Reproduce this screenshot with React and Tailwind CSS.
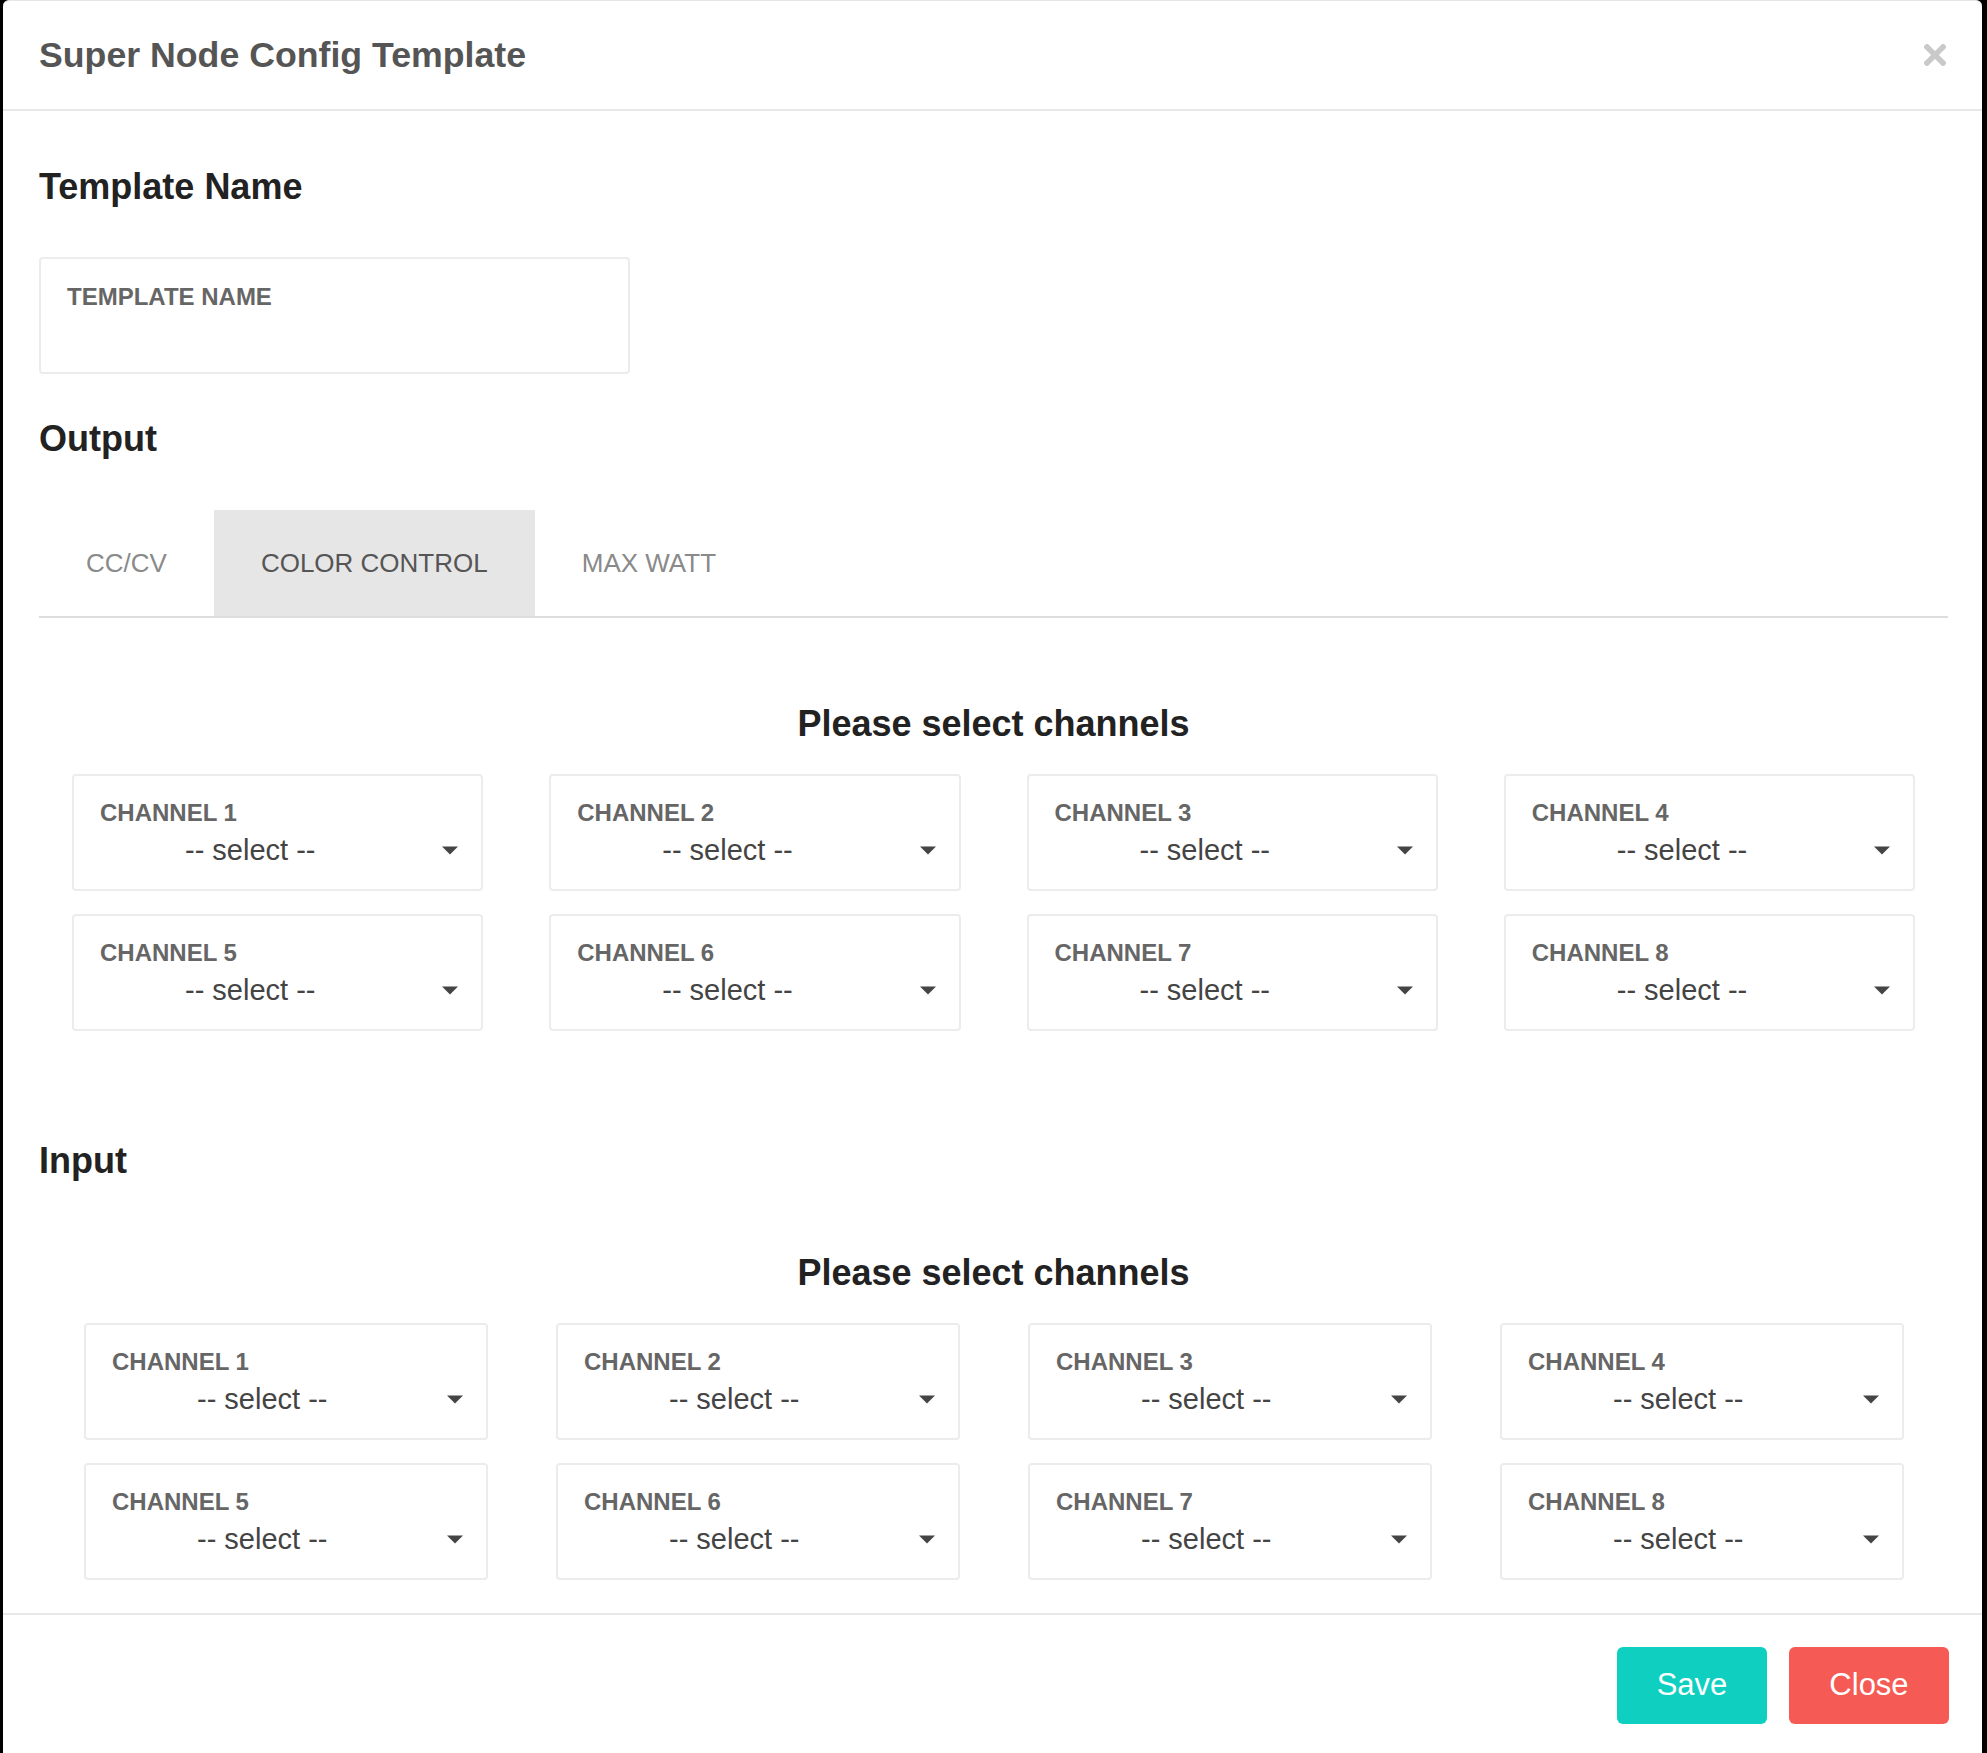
import React from "react";

const FONT = { fontFamily: '"Liberation Sans", Arial, Helvetica, sans-serif' };

function Arrow() {
  return (
    <svg className="ml-auto shrink-0" width="16" height="9" viewBox="0 0 16 9">
      <path d="M0 0.5 H16 L8 8.5 Z" fill="#444" />
    </svg>
  );
}

function ChannelBox({ label }) {
  return (
    <div className="h-[117px] rounded-[4px] border-2 border-[#ececec] bg-white pl-[26px] pr-[23px] pt-[23px]">
      <div className="text-[24px] leading-[28px] font-bold text-[#666]">{label}</div>
      <div className="mt-[6px] flex h-[34px] items-center">
        <span className="pl-[85px] text-[29px] leading-[34px] text-[#444]">-- select --</span>
        <Arrow />
      </div>
    </div>
  );
}

function ChannelGrid({ className }) {
  const labels = [1, 2, 3, 4, 5, 6, 7, 8].map((n) => `CHANNEL ${n}`);
  return (
    <div className={className}>
      {labels.map((l) => (
        <ChannelBox key={l} label={l} />
      ))}
    </div>
  );
}

export default function App() {
  return (
    <div className="h-[1753px] w-[1987px] overflow-hidden bg-black" style={FONT}>
      <div className="ml-[3px] mr-[5px] h-[1753px] overflow-hidden rounded-t-[6px] border-t border-[#e6e6e6] bg-white">
        {/* Header */}
        <div className="flex h-[110px] items-center justify-between border-b-2 border-[#e8e8e8] pl-[36px] pr-[36px]">
          <div className="text-[35.7px] font-bold leading-[44px] text-[#555]">Super Node Config Template</div>
          <svg width="22" height="22" viewBox="0 0 22 22">
            <path d="M3 3 L19 19 M19 3 L3 19" stroke="#c9c9c9" strokeWidth="5.5" strokeLinecap="square" />
          </svg>
        </div>

        {/* Body */}
        <div className="pl-[36px] pr-[34px] pt-[54px] pb-[33px]">
          <h2 className="text-[36px] font-bold leading-[44px] text-[#222]">Template Name</h2>
          <div className="mt-[48px] h-[117px] w-[591px] rounded-[4px] border-2 border-[#ececec] pl-[26px] pt-[24px]">
            <div className="text-[24px] font-bold leading-[28px] text-[#666]">TEMPLATE NAME</div>
          </div>

          <h2 className="mt-[43px] text-[36px] font-bold leading-[44px] text-[#222]">Output</h2>

          <div className="mt-[49px] flex border-b-2 border-[#dddddd]">
            <div className="flex h-[106px] items-center px-[47px] text-[26px] text-[#8a8a8a]">CC/CV</div>
            <div className="flex h-[106px] items-center bg-[#e6e6e6] px-[47px] text-[26px] text-[#555]">COLOR CONTROL</div>
            <div className="flex h-[106px] items-center px-[47px] text-[26px] text-[#8a8a8a]">MAX WATT</div>
          </div>

          <div className="mt-[84px] text-center text-[36px] font-bold leading-[44px] text-[#222]">Please select channels</div>
          <ChannelGrid className="mx-[33px] mt-[28px] grid grid-cols-4 gap-x-[66px] gap-y-[23px]" />

          <h2 className="mt-[108px] text-[36px] font-bold leading-[44px] text-[#222]">Input</h2>

          <div className="mt-[68px] text-center text-[36px] font-bold leading-[44px] text-[#222]">Please select channels</div>
          <ChannelGrid className="ml-[45px] mr-[44px] mt-[28px] grid grid-cols-4 gap-x-[68px] gap-y-[23px]" />
        </div>

        {/* Footer */}
        <div className="flex justify-end gap-[22px] border-t-2 border-[#e8e8e8] pt-[32px] pr-[33px]">
          <button className="h-[77px] w-[150px] rounded-[6px] bg-[#0fd0c0] text-[31px] text-white">Save</button>
          <button className="h-[77px] w-[160px] rounded-[6px] bg-[#f55a54] text-[31px] text-white">Close</button>
        </div>
      </div>
    </div>
  );
}
